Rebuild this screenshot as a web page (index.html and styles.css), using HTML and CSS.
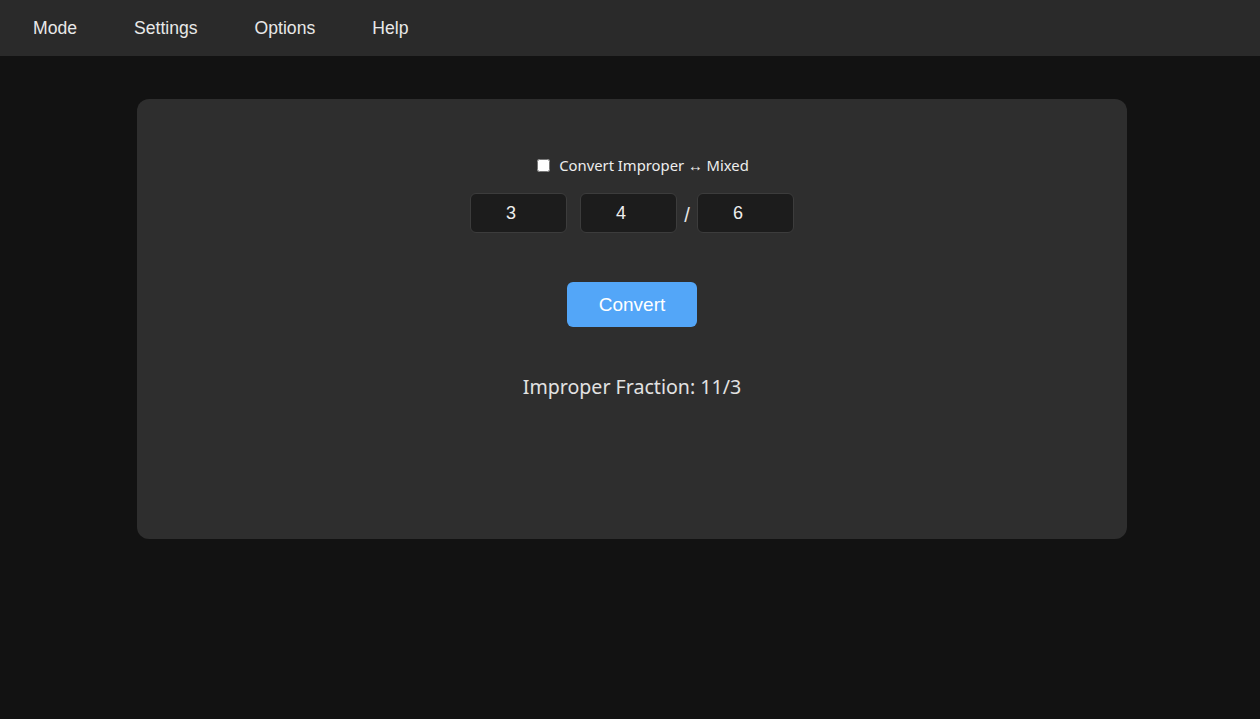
FILE: index.html
```html
<!DOCTYPE html>
<html lang="en">
<head>
    <meta charset="UTF-8">
    <meta name="viewport" content="width=device-width, initial-scale=1.0">
    <title>Fraction Converter</title>
    <link rel="stylesheet" href="styles.css">
</head>
<body>
    <nav class="menu-bar">
        <span class="menu-item">Mode</span>
        <span class="menu-item">Settings</span>
        <span class="menu-item">Options</span>
        <span class="menu-item">Help</span>
    </nav>

    <div class="card">
        <label class="toggle">
            <input type="checkbox" id="modeToggle">
            Convert Improper &harr; Mixed
        </label>

        <div class="fraction-row">
            <input type="number" class="num-box" id="whole" value="3">
            <input type="number" class="num-box" id="numerator" value="4">
            <span class="slash">/</span>
            <input type="number" class="num-box" id="denominator" value="6">
        </div>

        <button class="convert-btn">Convert</button>

        <div class="result" id="result">Improper Fraction: 11/3</div>
    </div>
</body>
</html>
```

FILE: styles.css
```css
* {
    margin: 0;
    padding: 0;
    box-sizing: border-box;
}

body {
    background: #121212;
    min-height: 100vh;
    font-family: 'Liberation Sans', Arial, sans-serif;
    color: #e6e6e6;
}

.menu-bar {
    display: flex;
    align-items: center;
    gap: 57px;
    height: 56px;
    padding-left: 33px;
    background: #2a2a2a;
}

.menu-item {
    font-size: 17.6px;
    color: #e8e8e8;
}

.card {
    width: 990px;
    height: 440px;
    margin: 43px 0 0 137px;
    padding-top: 56px;
    background: #2e2e2e;
    border-radius: 12px;
    display: flex;
    flex-direction: column;
    align-items: center;
}

.toggle {
    display: flex;
    align-items: center;
    gap: 9px;
    margin-left: 22px;
    font-family: 'Noto Sans', sans-serif;
    font-size: 14.8px;
    color: #ededed;
}

.toggle input {
    width: 13px;
    height: 13px;
    margin: 0;
}

.fraction-row {
    display: flex;
    align-items: center;
    margin-top: 18px;
}

.num-box {
    width: 97px;
    height: 40px;
    background: #1c1c1c;
    border: 1px solid #3c3c3c;
    border-radius: 6px;
    color: #eeeeee;
    font-family: 'Liberation Sans', Arial, sans-serif;
    font-size: 18px;
    text-align: center;
}

.num-box + .num-box {
    margin-left: 13px;
}

.slash {
    width: 20px;
    text-align: center;
    font-size: 20px;
    color: #e6e6e6;
    padding-top: 4px;
}

.convert-btn {
    margin-top: 49px;
    width: 130px;
    height: 45px;
    background: #53a6f8;
    border: none;
    border-radius: 6px;
    color: #ffffff;
    font-family: 'Liberation Sans', Arial, sans-serif;
    font-size: 19px;
    cursor: pointer;
}

.result {
    margin-top: 46px;
    font-family: 'Noto Sans', sans-serif;
    font-size: 19.6px;
    color: #e2e2e2;
}
```
